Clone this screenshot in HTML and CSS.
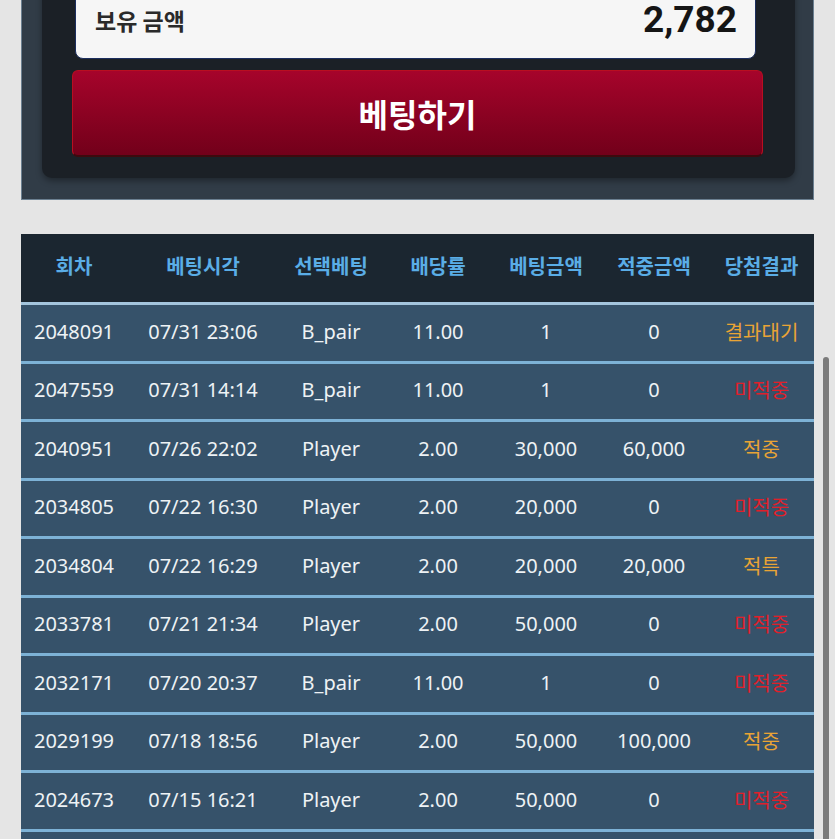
FILE: index.html
```html
<!DOCTYPE html>
<html>
<head>
  <meta charset="utf-8">
  <title>베팅내역</title>
  <link rel="stylesheet" href="styles.css">
</head>
<body>
  <div class="stage">
    <div class="bet-panel">
      <div class="bet-box">
        <div class="wallet">
          <span class="wallet-label">보유 금액</span>
          <span class="wallet-value">2,782</span>
        </div>
        <button class="bet-btn">베팅하기</button>
      </div>
    </div>

    <table class="history">
      <colgroup>
        <col style="width:106px">
        <col style="width:152px">
        <col style="width:104px">
        <col style="width:110px">
        <col style="width:106px">
        <col style="width:110px">
        <col style="width:105px">
      </colgroup>
      <thead>
        <tr>
          <th>회차</th>
          <th>베팅시각</th>
          <th>선택베팅</th>
          <th>배당률</th>
          <th>베팅금액</th>
          <th>적중금액</th>
          <th>당첨결과</th>
        </tr>
      </thead>
      <tbody>
        <tr>
          <td>2048091</td><td>07/31 23:06</td><td>B_pair</td><td>11.00</td><td>1</td><td>0</td>
          <td class="result wait">결과대기</td>
        </tr>
        <tr>
          <td>2047559</td><td>07/31 14:14</td><td>B_pair</td><td>11.00</td><td>1</td><td>0</td>
          <td class="result lose">미적중</td>
        </tr>
        <tr>
          <td>2040951</td><td>07/26 22:02</td><td>Player</td><td>2.00</td><td>30,000</td><td>60,000</td>
          <td class="result win">적중</td>
        </tr>
        <tr>
          <td>2034805</td><td>07/22 16:30</td><td>Player</td><td>2.00</td><td>20,000</td><td>0</td>
          <td class="result lose">미적중</td>
        </tr>
        <tr>
          <td>2034804</td><td>07/22 16:29</td><td>Player</td><td>2.00</td><td>20,000</td><td>20,000</td>
          <td class="result win">적특</td>
        </tr>
        <tr>
          <td>2033781</td><td>07/21 21:34</td><td>Player</td><td>2.00</td><td>50,000</td><td>0</td>
          <td class="result lose">미적중</td>
        </tr>
        <tr>
          <td>2032171</td><td>07/20 20:37</td><td>B_pair</td><td>11.00</td><td>1</td><td>0</td>
          <td class="result lose">미적중</td>
        </tr>
        <tr>
          <td>2029199</td><td>07/18 18:56</td><td>Player</td><td>2.00</td><td>50,000</td><td>100,000</td>
          <td class="result win">적중</td>
        </tr>
        <tr>
          <td>2024673</td><td>07/15 16:21</td><td>Player</td><td>2.00</td><td>50,000</td><td>0</td>
          <td class="result lose">미적중</td>
        </tr>
        <tr>
          <td>2021538</td><td>07/13 19:48</td><td>Banker</td><td>1.95</td><td>50,000</td><td>0</td>
          <td class="result lose">미적중</td>
        </tr>
      </tbody>
    </table>
  </div>

  <div class="scroll-thumb"></div>
</body>
</html>
```

FILE: styles.css
```css
html,
body {
  overflow: hidden;
}

body {
  background-color: #e5e5e5;
  margin: 0;
  font-family: "Noto Sans", "Noto Sans CJK KR", sans-serif;
}

.stage {
  margin-top: -60px;
  padding: 0 21px;
}

/* betting panel */

.bet-panel {
  background-color: #313c47;
  border: 1px solid #6b7f90;
  border-top: none;
  padding: 20px 18px 21px 20px;
}

.bet-box {
  background-color: #1b2026;
  border-radius: 10px;
  box-shadow: 0 3px 6px rgba(0, 0, 0, 0.35);
  padding: 20px 32px 21px 30px;
}

.wallet {
  display: flex;
  justify-content: space-between;
  align-items: center;
  height: 77px;
  margin: 0 7px 0 3px;
  padding: 0 18px 0 19px;
  background-color: #f6f6f6;
  border: 1px solid #1c2e5e;
  border-radius: 8px;
}

.wallet-label {
  font-family: "Noto Sans CJK KR", sans-serif;
  font-size: 23px;
  font-weight: 700;
  color: #2a2a2a;
}

.wallet-value {
  font-family: Roboto, "Liberation Sans", sans-serif;
  font-size: 37px;
  font-weight: 700;
  color: #151515;
}

.bet-btn {
  display: block;
  width: 100%;
  height: 87px;
  margin-top: 11px;
  background: linear-gradient(#a6042b, #72001a);
  border: 1px solid #b80f20;
  border-bottom: 2px solid #3d0a0e;
  border-radius: 6px;
  color: #ffffff;
  font-family: "Noto Sans CJK KR", sans-serif;
  font-size: 32px;
  font-weight: 700;
  cursor: pointer;
}

/* history table */

.history {
  width: 100%;
  margin-top: 34px;
  border-collapse: separate;
  border-spacing: 0;
  table-layout: fixed;
}

.history th {
  height: 63px;
  padding: 0 0 5px;
  background-color: #1b2630;
  color: #5aade6;
  font-family: "Noto Sans CJK KR", sans-serif;
  font-size: 20px;
  font-weight: 700;
}

.history td {
  height: 52.5px;
  padding: 0 0 3px;
  background-color: #36526a;
  border-top: 3px solid #7db2d6;
  color: #eef2f5;
  font-size: 20px;
  text-align: center;
  white-space: nowrap;
}

.history tbody tr:first-child td {
  border-top-color: #a4c5dd;
}

.history td.result {
  font-family: "Noto Sans CJK KR", sans-serif;
  font-size: 20px;
}

.result.wait,
.result.win {
  color: #e9a435;
}

.result.lose {
  color: #e0202a;
}

.scroll-thumb {
  position: fixed;
  top: 357px;
  right: 6px;
  width: 6px;
  height: 520px;
  background-color: #7b7b7b;
  border-radius: 3px;
}
```
